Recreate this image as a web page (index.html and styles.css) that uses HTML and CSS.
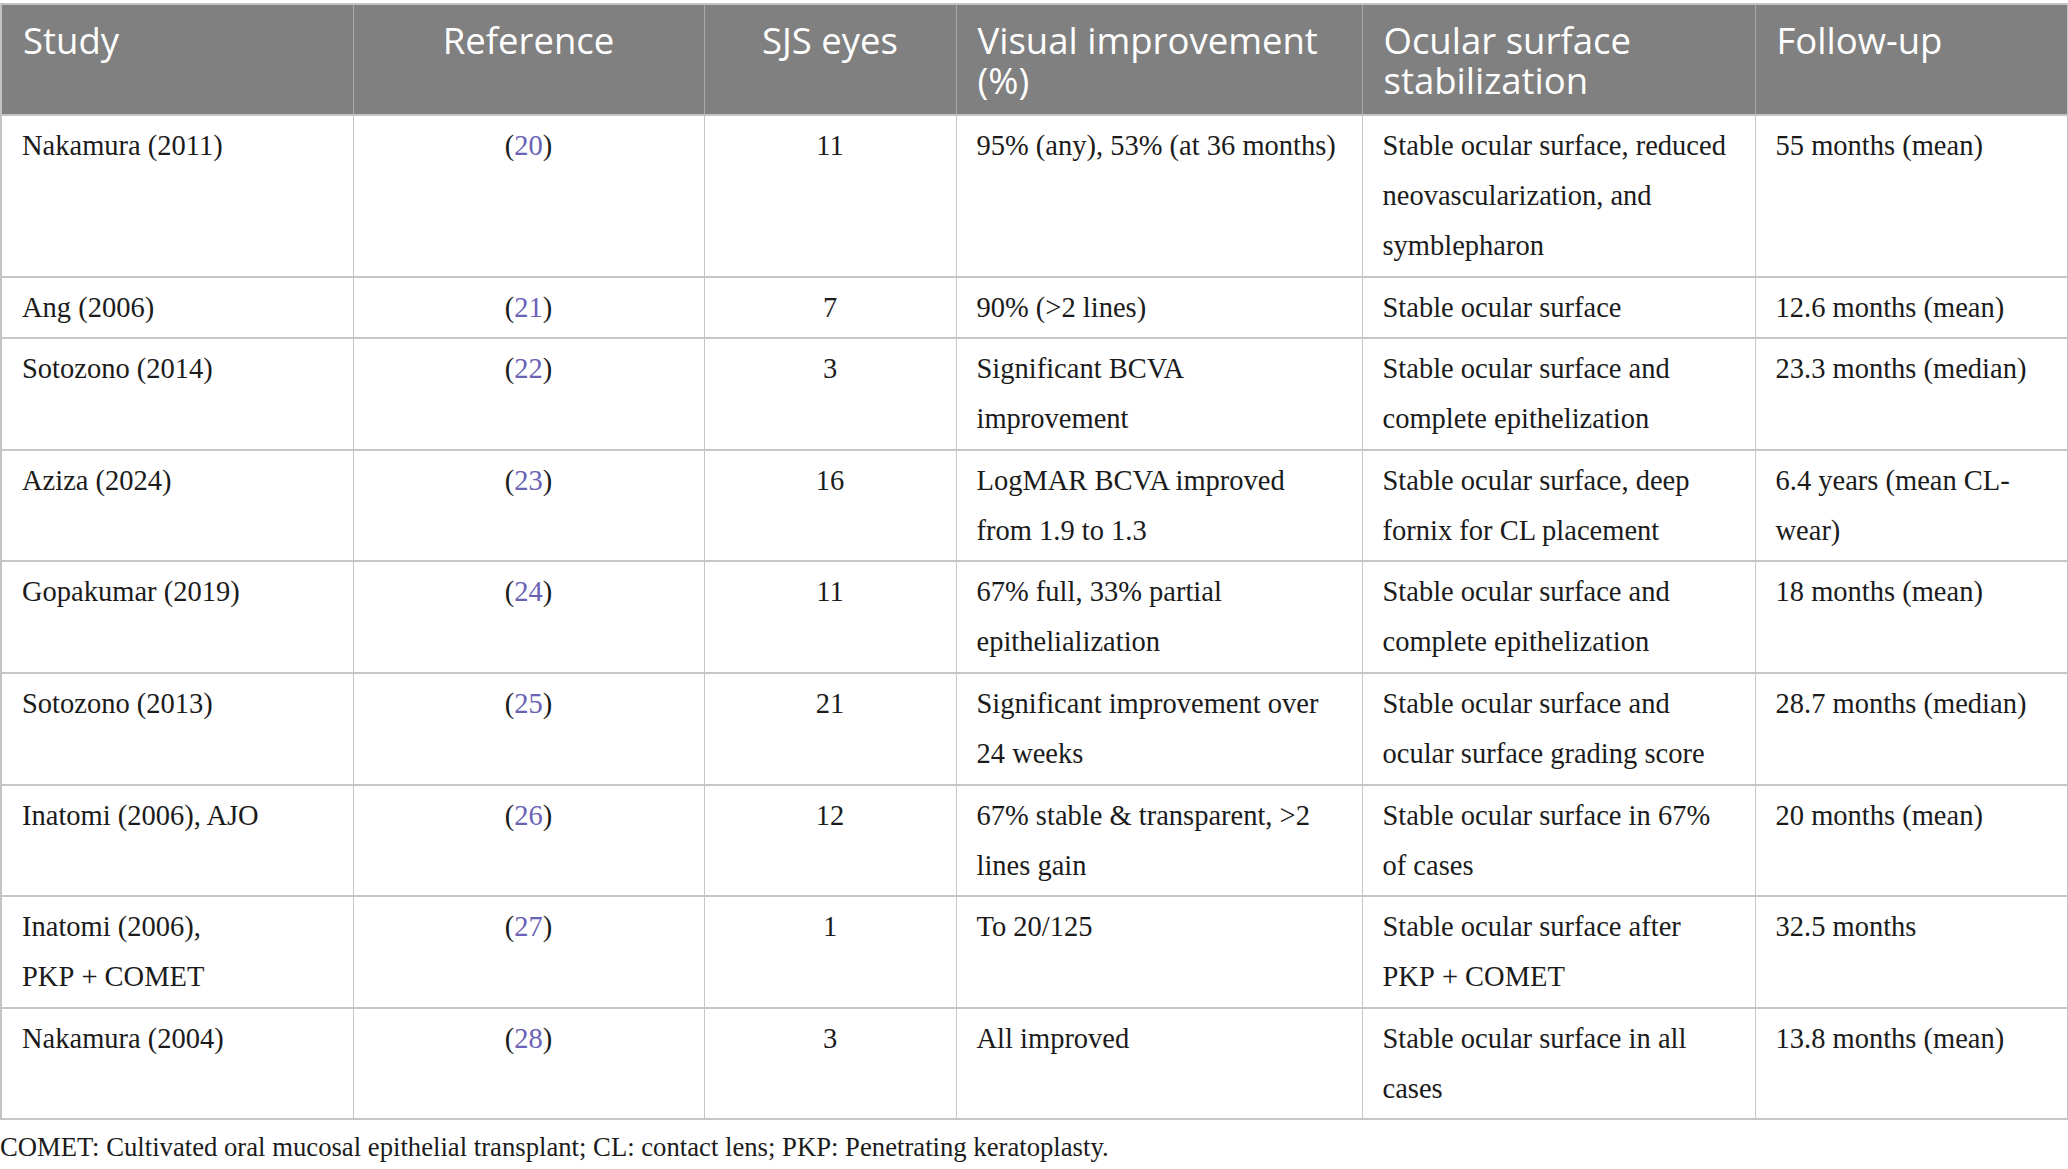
FILE: index.html
```html
<!DOCTYPE html>
<html lang="en">
<head>
<meta charset="utf-8">
<title>SJS COMET studies</title>
<link rel="stylesheet" href="styles.css">
</head>
<body>
<div class="wrap">
<table class="data">
  <colgroup>
    <col class="c1"><col class="c2"><col class="c3"><col class="c4"><col class="c5"><col class="c6">
  </colgroup>
  <thead>
    <tr>
      <th>Study</th>
      <th class="center">Reference</th>
      <th class="center">SJS eyes</th>
      <th>Visual improvement (%)</th>
      <th>Ocular surface stabilization</th>
      <th>Follow-up</th>
    </tr>
  </thead>
  <tbody>
    <tr>
      <td>Nakamura (2011)</td>
      <td class="center">(<a href="#r20">20</a>)</td>
      <td class="center">11</td>
      <td>95% (any), 53% (at 36 months)</td>
      <td>Stable ocular surface, reduced neovascularization, and symblepharon</td>
      <td>55 months (mean)</td>
    </tr>
    <tr>
      <td>Ang (2006)</td>
      <td class="center">(<a href="#r21">21</a>)</td>
      <td class="center">7</td>
      <td>90% (&gt;2 lines)</td>
      <td>Stable ocular surface</td>
      <td>12.6 months (mean)</td>
    </tr>
    <tr>
      <td>Sotozono (2014)</td>
      <td class="center">(<a href="#r22">22</a>)</td>
      <td class="center">3</td>
      <td>Significant BCVA<br>improvement</td>
      <td>Stable ocular surface and complete epithelization</td>
      <td>23.3 months (median)</td>
    </tr>
    <tr>
      <td>Aziza (2024)</td>
      <td class="center">(<a href="#r23">23</a>)</td>
      <td class="center">16</td>
      <td>LogMAR BCVA improved<br>from 1.9 to 1.3</td>
      <td>Stable ocular surface, deep fornix for CL placement</td>
      <td>6.4 years (mean CL-wear)</td>
    </tr>
    <tr>
      <td>Gopakumar (2019)</td>
      <td class="center">(<a href="#r24">24</a>)</td>
      <td class="center">11</td>
      <td>67% full, 33% partial epithelialization</td>
      <td>Stable ocular surface and complete epithelization</td>
      <td>18 months (mean)</td>
    </tr>
    <tr>
      <td>Sotozono (2013)</td>
      <td class="center">(<a href="#r25">25</a>)</td>
      <td class="center">21</td>
      <td>Significant improvement over 24 weeks</td>
      <td>Stable ocular surface and ocular surface grading score</td>
      <td>28.7 months (median)</td>
    </tr>
    <tr>
      <td>Inatomi (2006), AJO</td>
      <td class="center">(<a href="#r26">26</a>)</td>
      <td class="center">12</td>
      <td>67% stable &amp; transparent, &gt;2 lines gain</td>
      <td>Stable ocular surface in 67%<br>of cases</td>
      <td>20 months (mean)</td>
    </tr>
    <tr>
      <td>Inatomi (2006), PKP&nbsp;+&nbsp;COMET</td>
      <td class="center">(<a href="#r27">27</a>)</td>
      <td class="center">1</td>
      <td>To 20/125</td>
      <td>Stable ocular surface after PKP&nbsp;+&nbsp;COMET</td>
      <td>32.5 months</td>
    </tr>
    <tr>
      <td>Nakamura (2004)</td>
      <td class="center">(<a href="#r28">28</a>)</td>
      <td class="center">3</td>
      <td>All improved</td>
      <td>Stable ocular surface in all cases</td>
      <td>13.8 months (mean)</td>
    </tr>
  </tbody>
</table>
<p class="note">COMET: Cultivated oral mucosal epithelial transplant; CL: contact lens; PKP: Penetrating keratoplasty.</p>
</div>
</body>
</html>
```

FILE: styles.css
```css
html, body {
  margin: 0;
  padding: 0;
  background: #ffffff;
}

.wrap {
  padding-top: 3px;
  width: 2067px;
}

.data {
  width: 2067px;
  border-collapse: collapse;
  table-layout: fixed;
  font-family: "Liberation Serif", "Times New Roman", serif;
  font-size: 28.5px;
  line-height: 50px;
  color: #1b1b1b;
  border: 2px solid #c3c3c3;
}

.c1 { width: 352px; }
.c2 { width: 351px; }
.c3 { width: 252px; }
.c4 { width: 406px; }
.c5 { width: 393px; }
.c6 { width: 313px; }

.data th {
  background: #7f807f;
  color: #ffffff;
  font-family: "Open Sans", "Noto Sans", sans-serif;
  font-weight: 400;
  font-size: 36.5px;
  line-height: 40px;
  text-align: left;
  vertical-align: top;
  padding: 15px 20px 14px 21px;
  height: 80px;
  border-left: 1px solid #a9a9a9;
  border-right: 1px solid #a9a9a9;
  border-top: 2px solid #c3c3c3;
  border-bottom: 2px solid #c3c3c3;
}

.data td {
  vertical-align: top;
  text-align: left;
  padding: 5px 18px 4.6px 20px;
  border: 2px solid #c6c6c6;
  border-left-width: 1px;
  border-right-width: 1px;
}

.data th.center,
.data td.center {
  text-align: center;
  padding-left: 20px;
  padding-right: 20px;
}

.data a {
  color: #6a62b6;
  text-decoration: none;
}

.note {
  margin: 11px 0 0 0;
  font-family: "Liberation Serif", "Times New Roman", serif;
  font-size: 26.7px;
  line-height: 32px;
  color: #1b1b1b;
}
```
